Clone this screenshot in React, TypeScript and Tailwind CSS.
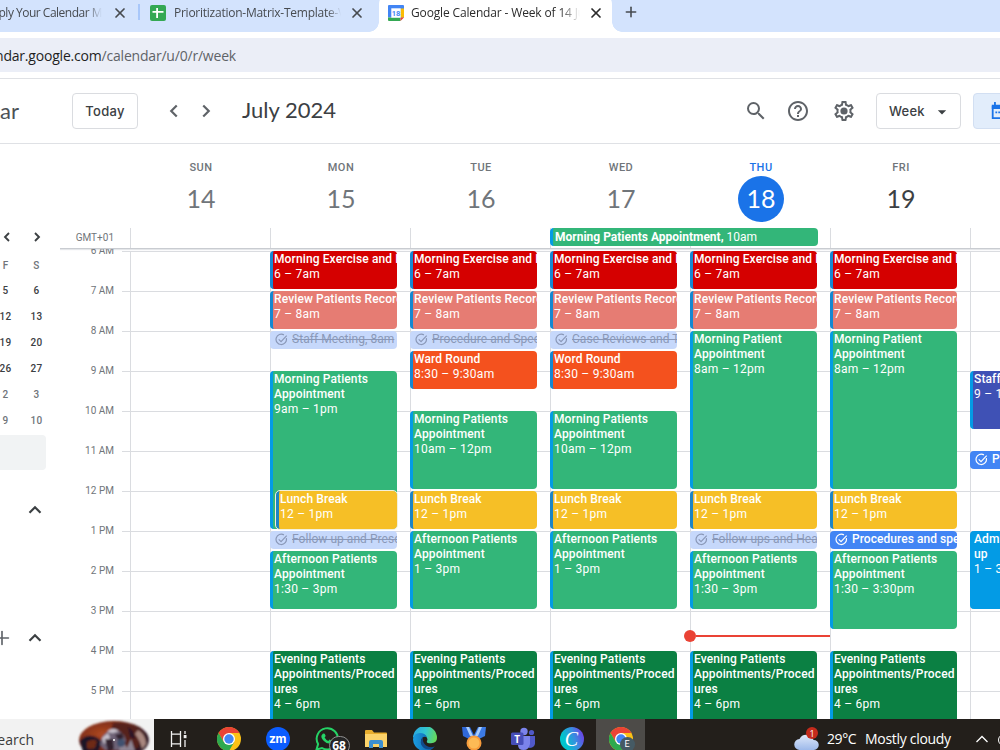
import type { ReactNode } from "react";
import { MdSearch, MdHelpOutline, MdArrowDropDown } from "react-icons/md";
import { ChevronLeft, ChevronRight, ChevronUp, Plus, X } from "lucide-react";
import clsx from "clsx";

type CalEvent = {
  title: string;
  time?: string;
  start: number;
  end: number;
  kind: "red" | "pink" | "green" | "dark" | "yellow" | "orange" | "indigo" | "blue" | "done" | "task";
  nested?: boolean;
};

type Day = { name: string; date: number; state: "past" | "today" | "future"; events: CalEvent[] };

const FIRST_HOUR = 6;

const exercise: CalEvent = { title: "Morning Exercise and Reading", time: "6 – 7am", start: 6, end: 7, kind: "red" };
const review: CalEvent = { title: "Review Patients Records", time: "7 – 8am", start: 7, end: 8, kind: "pink" };
const lunch: CalEvent = { title: "Lunch Break", time: "12 – 1pm", start: 12, end: 13, kind: "yellow" };
const evening: CalEvent = { title: "Evening Patients Appointments/Procedures", time: "4 – 6pm", start: 16, end: 18, kind: "dark" };

const morning = (title: string, time: string, start: number, end: number): CalEvent => ({ title, time, start, end, kind: "green" });
const afternoon = (time: string, start: number, end: number): CalEvent => ({
  title: "Afternoon Patients Appointment",
  time,
  start,
  end,
  kind: "green",
});

const days: Day[] = [
  { name: "SUN", date: 14, state: "past", events: [] },
  {
    name: "MON",
    date: 15,
    state: "past",
    events: [
      exercise,
      review,
      { title: "Staff Meeting, 8am", start: 8, end: 8.5, kind: "done" },
      morning("Morning Patients Appointment", "9am – 1pm", 9, 13),
      { ...lunch, nested: true },
      { title: "Follow up and Prescriptions", start: 13, end: 13.5, kind: "done" },
      afternoon("1:30 – 3pm", 13.5, 15),
      evening,
    ],
  },
  {
    name: "TUE",
    date: 16,
    state: "past",
    events: [
      exercise,
      review,
      { title: "Procedure and Specialist", start: 8, end: 8.5, kind: "done" },
      { title: "Ward Round", time: "8:30 – 9:30am", start: 8.5, end: 9.5, kind: "orange" },
      morning("Morning Patients Appointment", "10am – 12pm", 10, 12),
      lunch,
      afternoon("1 – 3pm", 13, 15),
      evening,
    ],
  },
  {
    name: "WED",
    date: 17,
    state: "past",
    events: [
      exercise,
      review,
      { title: "Case Reviews and Tests", start: 8, end: 8.5, kind: "done" },
      { title: "Word Round", time: "8:30 – 9:30am", start: 8.5, end: 9.5, kind: "orange" },
      morning("Morning Patients Appointment", "10am – 12pm", 10, 12),
      lunch,
      afternoon("1 – 3pm", 13, 15),
      evening,
    ],
  },
  {
    name: "THU",
    date: 18,
    state: "today",
    events: [
      exercise,
      review,
      morning("Morning Patient Appointment", "8am – 12pm", 8, 12),
      lunch,
      { title: "Follow ups and Health", start: 13, end: 13.5, kind: "done" },
      afternoon("1:30 – 3pm", 13.5, 15),
      evening,
    ],
  },
  {
    name: "FRI",
    date: 19,
    state: "future",
    events: [
      exercise,
      review,
      morning("Morning Patient Appointment", "8am – 12pm", 8, 12),
      lunch,
      { title: "Procedures and specialist", start: 13, end: 13.5, kind: "task" },
      afternoon("1:30 – 3:30pm", 13.5, 15.5),
      evening,
    ],
  },
  {
    name: "",
    date: 20,
    state: "future",
    events: [
      { title: "Staff Training", time: "9 – 10:30am", start: 9, end: 10.5, kind: "indigo" },
      { title: "Procedures", start: 11, end: 11.5, kind: "task" },
      { title: "Admin and Follow up", time: "1 – 3pm", start: 13, end: 15, kind: "blue" },
    ],
  },
];

const hours = ["6 AM", "7 AM", "8 AM", "9 AM", "10 AM", "11 AM", "12 PM", "1 PM", "2 PM", "3 PM", "4 PM", "5 PM"];

const eventColors: Record<CalEvent["kind"], string> = {
  red: "bg-[#d50000] border-[#1488d2]",
  pink: "bg-[#e67c73] border-[#1488d2]",
  green: "bg-[#33b679] border-[#039be5]",
  dark: "bg-[#0b8043] border-[#039be5]",
  yellow: "bg-[#f6bf26] border-[#1d84c4]",
  orange: "bg-[#f4511e] border-[#1488d2]",
  indigo: "bg-[#3f51b5] border-[#039be5]",
  blue: "bg-[#039be5] border-[#039be5] pr-5",
  done: "bg-[#c6d8fb]",
  task: "bg-[#4285f4]",
};

function TaskCheck() {
  return (
    <svg viewBox="0 0 14 14" className="size-[13px] shrink-0" fill="none" stroke="currentColor" strokeWidth="1.3">
      <path d="M12.2 5.6A5.6 5.6 0 1 1 9.6 2" />
      <path d="M4 6.8l2.5 2.5L12.6 2.8" />
    </svg>
  );
}

function EventCard({ event }: { event: CalEvent }) {
  const row = (event.start - FIRST_HOUR) * 2 + 1;
  const span = (event.end - event.start) * 2;
  const isTask = event.kind === "done" || event.kind === "task";

  return (
    <div
      className={clsx(
        "z-10 col-start-1 mb-[2px] mr-[13px] overflow-hidden rounded-[4px] text-[12px] leading-[15px]",
        eventColors[event.kind],
        event.nested ? "ml-[5px] outline outline-[#f3f0dc]" : "-ml-px",
        isTask ? "flex items-center gap-[4px] whitespace-nowrap pb-[2px] pl-[5px] tracking-[0.05px]" : "border-l-[3px] pl-px pt-px text-white",
        event.kind === "done" && "text-[#8a98b8] line-through",
        event.kind === "task" && "font-medium text-white",
      )}
      style={{ gridRow: `${row} / span ${span}` }}
    >
      {isTask ? (
        <>
          <TaskCheck />
          <span>{event.title}</span>
        </>
      ) : (
        <>
          <div className={clsx("font-medium tracking-[0.12px]", span <= 2 ? "whitespace-nowrap" : "wrap-anywhere")}>{event.title}</div>
          <div className="whitespace-nowrap tracking-[0.25px]">{event.time}</div>
        </>
      )}
    </div>
  );
}

function DayColumn({ day }: { day: Day }) {
  return (
    <div className="relative grid w-[140px] shrink-0 grid-cols-[minmax(0,1fr)] grid-rows-[repeat(24,20px)] border-l border-[#dadce0]">
      {hours.map((h, i) => (
        <div key={h} className="col-start-1 border-t border-[#dadce0]" style={{ gridRow: `${i * 2 + 1} / span 2` }} />
      ))}
      {day.events.map((e) => (
        <EventCard key={e.title + e.start} event={e} />
      ))}
      {day.state === "today" && (
        <div className="absolute -left-[7px] right-0 top-[379px] z-20 flex items-center">
          <span className="size-3 rounded-full bg-[#ea4335]" />
          <span className="h-[2px] flex-1 bg-[#ea4335]" />
        </div>
      )}
    </div>
  );
}

function TabStrip() {
  return (
    <div className="flex h-8 shrink-0 bg-[#d3e3fd] font-['Open_Sans',sans-serif] text-[12px] text-[#474b50]">
      <div className="flex w-[138px] items-center overflow-hidden pb-[7px]">
        <span className="flex w-[102px] shrink-0 justify-end overflow-hidden whitespace-nowrap tracking-[-0.5px] [mask-image:linear-gradient(90deg,#000_85%,transparent)]">
          Apply Your Calendar M
        </span>
        <X className="ml-[10px] size-4 shrink-0" strokeWidth={2.6} />
      </div>
      <div className="mt-1 h-4 w-[2px] bg-[#a8c7fa]" />
      <div className="flex w-[239px] items-center pb-[7px] pl-[10px]">
        <svg viewBox="0 0 16 16" className="size-4 shrink-0">
          <rect width="16" height="16" rx="2" fill="#34a853" />
          <path d="M7.1 3v10M2.5 6.9h11" stroke="#fff" strokeWidth="1.8" />
        </svg>
        <span className="ml-2 w-[167px] shrink-0 overflow-hidden whitespace-nowrap tracking-[-0.25px] [mask-image:linear-gradient(90deg,#000_92%,transparent)]">
          Prioritization-Matrix-Template-V
        </span>
        <X className="ml-2 size-4 shrink-0" strokeWidth={2.6} />
      </div>
      <div className="relative -mt-[6px] flex w-[233px] items-center rounded-t-[10px] bg-white pb-[7px] pl-[9px] pt-[6px] text-[#2b2b2b]">
        <span className="absolute -left-[10px] bottom-0 size-[10px] bg-[radial-gradient(circle_at_0_0,transparent_9.5px,#fff_10px)]" />
        <span className="absolute -right-[10px] bottom-0 size-[10px] bg-[radial-gradient(circle_at_100%_0,transparent_9.5px,#fff_10px)]" />
        <svg viewBox="0 0 16 16" className="size-4 shrink-0">
          <path d="M0 1a1 1 0 0 1 1-1h14a1 1 0 0 1 1 1v11.5H0z" fill="#4285f4" />
          <path d="M12.5 3.5H16v9h-3.5z" fill="#fbbc04" />
          <path d="M0 12.5h12.5V16H1a1 1 0 0 1-1-1z" fill="#34a853" />
          <path d="M12.5 12.5H16L12.5 16z" fill="#ea4335" />
          <rect x="3.3" y="3.3" width="9.4" height="9.4" fill="#fff" />
          <text x="8" y="10.8" fontSize="7.5" fontWeight="700" textAnchor="middle" fill="#4285f4" fontFamily="Roboto">18</text>
        </svg>
        <span className="ml-[7px] w-[169px] shrink-0 overflow-hidden whitespace-nowrap tracking-[-0.15px] [mask-image:linear-gradient(90deg,#000_88%,transparent)]">
          Google Calendar - Week of 14 July
        </span>
        <X className="ml-2 size-4 shrink-0" strokeWidth={2.6} />
      </div>
      <div className="flex items-center pb-[8px] pl-[11px]">
        <Plus className="size-4" strokeWidth={2.4} />
      </div>
    </div>
  );
}

function CalendarHeader() {
  return (
    <header className="flex h-[66px] shrink-0 items-center overflow-hidden border-y border-[#dfe1e5] font-['Lato',sans-serif] text-[#3c4043]">
      <div className="flex w-[19px] shrink-0 justify-end pb-[2px] text-[22px] text-[#4d5156]">Calendar</div>
      <button className="ml-[53px] h-9 w-[66px] shrink-0 rounded-[4px] border border-[#dadce0] pt-px font-[Inter,sans-serif] text-[13px] font-medium tracking-[0.25px]">
        Today
      </button>
      <ChevronLeft className="ml-[25px] size-[22px] shrink-0 text-[#5f6368] [stroke-linecap:butt] [stroke-linejoin:miter]" strokeWidth={2.4} />
      <ChevronRight className="ml-[10px] size-[22px] shrink-0 text-[#5f6368] [stroke-linecap:butt] [stroke-linejoin:miter]" strokeWidth={2.4} />
      <h1 className="ml-[25px] w-[502px] shrink-0 whitespace-nowrap pb-[3px] text-[22px]">July 2024</h1>
      <div className="flex shrink-0 items-center text-[#5f6368]">
        <MdSearch className="size-6" />
        <MdHelpOutline className="ml-[18px] size-6" />
        <svg viewBox="0 0 24 24" className="ml-[22px] size-6" fill="currentColor">
          <path d="M19.43 12.98c.04-.32.07-.64.07-.98 0-.34-.03-.66-.07-.98l2.11-1.65c.19-.15.24-.42.12-.64l-2-3.46c-.09-.16-.26-.25-.44-.25-.06 0-.12.01-.17.03l-2.49 1c-.52-.4-1.08-.73-1.69-.98l-.38-2.65C14.46 2.18 14.25 2 14 2h-4c-.25 0-.46.18-.49.42l-.38 2.65c-.61.25-1.17.59-1.69.98l-2.49-1c-.06-.02-.12-.03-.18-.03-.17 0-.34.09-.43.25l-2 3.46c-.13.22-.07.49.12.64l2.11 1.65c-.04.32-.07.65-.07.98s.03.66.07.98l-2.11 1.65c-.19.15-.24.42-.12.64l2 3.46c.09.16.26.25.44.25.06 0 .12-.01.17-.03l2.49-1c.52.4 1.08.73 1.69.98l.38 2.65c.03.24.24.42.49.42h4c.25 0 .46-.18.49-.42l.38-2.65c.61-.25 1.17-.59 1.69-.98l2.49 1c.06.02.12.03.18.03.17 0 .34-.09.43-.25l2-3.46c.12-.22.07-.49-.12-.64l-2.11-1.65zm-1.98-1.71c.04.31.05.52.05.73 0 .21-.02.43-.05.73l-.14 1.13.89.7 1.08.84-.7 1.21-1.27-.51-1.04-.42-.9.68c-.43.32-.84.56-1.25.73l-1.06.43-.16 1.13-.2 1.35h-1.4l-.19-1.35-.16-1.13-1.06-.43c-.43-.18-.83-.41-1.23-.71l-.91-.7-1.06.43-1.27.51-.7-1.21 1.08-.84.89-.7-.14-1.13c-.03-.31-.05-.54-.05-.74s.02-.43.05-.73l.14-1.13-.89-.7-1.08-.84.7-1.21 1.27.51 1.04.42.9-.68c.43-.32.84-.56 1.25-.73l1.06-.43.16-1.13.2-1.35h1.39l.19 1.35.16 1.13 1.06.43c.43.18.83.41 1.23.71l.91.7 1.06-.43 1.27-.51.7 1.21-1.07.85-.89.7.14 1.13z" />
          <circle cx="12" cy="12" r="3.6" />
        </svg>
      </div>
      <button className="ml-[20px] flex h-9 w-[85px] shrink-0 items-center rounded-[4px] border border-[#dadce0] pl-3 pt-px font-[Inter,sans-serif] text-[13px] font-medium tracking-[0.2px]">
        Week
        <MdArrowDropDown className="ml-[7px] size-5" />
      </button>
      <div className="ml-3 flex h-9 w-14 shrink-0 items-center rounded-[4px] border border-[#d2dff2] bg-[#e2edfb] pl-4 text-[#1a73e8]">
        <svg viewBox="0 0 18 20" className="size-[18px] shrink-0" fill="none" stroke="currentColor" strokeWidth="2">
          <path d="M2 4h14v14H2z" />
          <path d="M1 6h16" strokeWidth="3.5" />
          <path d="M4.5 0v4M13.5 0v4" />
          <path d="M5 11.5h2M8.2 11.5h2M11.4 11.5h2" />
        </svg>
      </div>
    </header>
  );
}

const miniDates = [
  ["5", "6"],
  ["12", "13"],
  ["19", "20"],
  ["26", "27"],
  ["2", "3"],
  ["9", "10"],
];

function Sidebar() {
  return (
    <aside className="flex w-[60px] shrink-0 flex-col overflow-hidden pt-[83px] text-[10px] font-medium text-[#3c4043]">
      <div className="-ml-[3px] flex gap-[10px]">
        <ChevronLeft className="size-5 shrink-0 p-[2px] [stroke-linecap:butt] [stroke-linejoin:miter]" strokeWidth={2.8} />
        <ChevronRight className="size-5 shrink-0 p-[2px] [stroke-linecap:butt] [stroke-linejoin:miter]" strokeWidth={2.8} />
      </div>
      <div className="-ml-[10px] mt-[6px] grid w-[62px] grid-cols-2 text-center tracking-[0.2px]">
        <span className="h-[25px] leading-[26px] text-[#70757a]">F</span>
        <span className="h-[25px] leading-[26px] text-[#70757a]">S</span>
        {miniDates.map((week, i) =>
          week.map((d) => (
            <span key={d} className={clsx("h-[26px] leading-[26px]", i > 3 && "text-[#70757a]")}>
              {d}
            </span>
          )),
        )}
      </div>
      <div className="mt-px h-[35px] w-[46px] shrink-0 rounded-r-[4px] bg-[#f1f3f4]" />
      <ChevronUp className="ml-[24px] mt-[29px] size-[22px] shrink-0 [stroke-linecap:butt] [stroke-linejoin:miter]" strokeWidth={2.4} />
      <div className="mt-[106px] flex shrink-0 items-center">
        <Plus className="-ml-[9px] size-[22px] shrink-0 text-[#5f6368]" strokeWidth={1.8} />
        <ChevronUp className="ml-[11px] size-[22px] shrink-0 [stroke-linecap:butt] [stroke-linejoin:miter]" strokeWidth={2.4} />
      </div>
    </aside>
  );
}

function WeekGrid() {
  return (
    <main className="flex min-w-0 flex-1 flex-col overflow-hidden">
      <div className="flex h-[84px] shrink-0 pl-[71px]">
        {days.map((d) => (
          <div key={d.date} className="flex w-[140px] shrink-0 flex-col items-center pt-[16px]">
            <span
              className={clsx(
                "h-[16px] text-[11px] font-medium leading-[16px] tracking-[0.5px]",
                d.state === "today" ? "text-[#1a73e8]" : "text-[#70757a]",
              )}
            >
              {d.name}
            </span>
            <span
              className={clsx(
                "flex size-[46px] items-center justify-center rounded-full pb-px font-['Lato',sans-serif] text-[25px]",
                d.state === "past" && "text-[#70757a]",
                d.state === "today" && "bg-[#1a73e8] text-white",
                d.state === "future" && "text-[#3c4043]",
              )}
            >
              {d.name && d.date}
            </span>
          </div>
        ))}
      </div>
      <div className="flex h-[21px] shrink-0 border-b border-[#c9ccd1] shadow-[0_1px_1px_#e4e6e9]">
        <span className="w-[54px] shrink-0 text-right text-[10px] leading-[20px] text-[#70757a]">GMT+01</span>
        <div className="ml-4 grid w-[980px] shrink-0 grid-cols-[repeat(7,140px)]">
          {days.map((d, i) => (
            <div key={d.date} className="row-start-1 border-l border-[#dadce0]" style={{ gridColumnStart: i + 1 }} />
          ))}
          <div className="col-span-2 col-start-4 row-start-1 mb-[2px] mr-3 flex items-center rounded-[4px] border-l-[3px] border-[#039be5] bg-[#33b679] pl-[2px] text-[12px] leading-[15px] text-white">
            <span className="whitespace-pre">
              <span className="font-bold">Morning Patients Appointment,</span> 10am
            </span>
          </div>
        </div>
      </div>
      <div className="flex min-h-0 flex-1 items-start overflow-hidden">
        <div className="-mt-[18px] w-[54px] shrink-0 text-right text-[10px] leading-[40px] text-[#70757a]">
          {hours.map((h) => (
            <div key={h} className="h-10">
              {h}
            </div>
          ))}
        </div>
        <div className="ml-2 mt-[2px] w-2 shrink-0">
          {hours.map((h) => (
            <div key={h} className="h-10 border-t border-[#dadce0]" />
          ))}
        </div>
        <div className="mt-[2px] flex">
          {days.map((d) => (
            <DayColumn key={d.date} day={d} />
          ))}
        </div>
      </div>
    </main>
  );
}

function ChromeIcon() {
  return (
    <svg viewBox="0 0 24 24" className="size-6">
      <circle cx="12" cy="12" r="12" fill="#fbc116" />
      <path d="M12 6h10.4A12 12 0 0 0 1.6 6l5.2 9z" fill="#ea4335" />
      <path d="M1.6 6A12 12 0 0 0 12 24l5.2-9H6.8z" fill="#2da94f" />
      <circle cx="12" cy="12" r="6" fill="#fff" />
      <circle cx="12" cy="12" r="4.7" fill="#4285f4" />
    </svg>
  );
}

function TaskItem({ children, active }: { children: ReactNode; active?: boolean }) {
  return <div className={clsx("flex h-full w-[49px] shrink-0 justify-center pt-2", active && "bg-[#4d4b48]")}>{children}</div>;
}

function Taskbar() {
  return (
    <footer className="flex h-[31px] shrink-0 overflow-hidden bg-[#231f1b] font-['Open_Sans',sans-serif]">
      <div className="flex w-[154px] shrink-0 bg-[#f2f2f2]">
        <div className="flex w-[34px] shrink-0 justify-end overflow-hidden pt-[9px] text-[14px] leading-[24px] text-[#3b3b3b]">Search</div>
        <svg viewBox="0 0 74 31" className="ml-[43px] h-[31px] w-[74px]">
          <defs>
            <radialGradient id="wing" cx="0.35" cy="0.35" r="0.75">
              <stop offset="0" stopColor="#b04a22" />
              <stop offset="0.5" stopColor="#7c2c18" />
              <stop offset="0.85" stopColor="#2b1624" />
              <stop offset="1" stopColor="#57404a" />
            </radialGradient>
            <filter id="soft">
              <feGaussianBlur stdDeviation="1" />
            </filter>
          </defs>
          <g filter="url(#soft)">
            <ellipse cx="37" cy="21" rx="35" ry="19" fill="url(#wing)" />
            <path d="M3 22q5-6 12-5t10 7l-4 9H6z" fill="#1f1428" />
            <path d="M10 23q6-4 10-1l-2 7q-6 2-8 0z" fill="#6e2a18" />
            <path d="M36 4q18-2 28 10l-3 15H46q3-14-12-18z" fill="#57201a" />
            <path d="M23 26q1-12 12-15 12 0 14 11l-5 9H28z" fill="#6f6377" />
            <path d="M30 13q5-6 12-1l-6 2zM25 19l6-5 2 5-6 6z" fill="#c6bfca" />
            <path d="M28 20h8l1 10-6 3zM38 16l7-2 2 5-5 3z" fill="#32232f" />
            <path d="M45 19l5 10 4-9 4 12H42z" fill="#8f8594" />
            <path d="M51 8q6 3 7 12l-5-2z" fill="#2a1525" />
            <path d="M61 11q8 5 8 14l-4 5q-2-9-7-15z" fill="#a98880" />
            <circle cx="44" cy="24" r="4" fill="#40516f" />
          </g>
          <circle cx="37" cy="21" r="1" fill="#fff" />
        </svg>
      </div>
      <div className="flex h-full w-[50px] shrink-0 justify-center pt-[12px]">
        <svg viewBox="0 0 18 16" className="h-4 w-[18px]" fill="none" stroke="#f2f2f2" strokeWidth="1.3">
          <path d="M1.5 0v3.2h9V0M1.5 16v-3.2h9V16M1.5 3.2v9.6M10.5 3.2v9.6" />
          <path d="M15 0v3M15 9v7" />
          <path d="M13.7 4h2.8v3.2h-2.8z" fill="#f2f2f2" stroke="none" />
        </svg>
      </div>
      <TaskItem>
        <ChromeIcon />
      </TaskItem>
      <TaskItem>
        <div className="flex size-6 items-center justify-center rounded-full bg-[#0b5cff] pb-px font-[Inter,sans-serif] text-[12px] font-bold leading-none tracking-[-0.3px] text-white">
          zm
        </div>
      </TaskItem>
      <TaskItem>
        <div className="relative h-6 w-6">
          <svg viewBox="0 0 24 24" className="size-6" fill="none">
            <path d="M1.5 22.5l1.6-5.4A10.6 10.6 0 1 1 7 21z" stroke="#25d366" strokeWidth="2" />
            <path d="M8 6.5l1.7.2 1 2.4-1.1 1.5q1.2 2.3 3.7 3.4l1.3-1.5 2.5 1.2q.2 2-2 2.8-3 .6-6.2-2.5T6.5 8.5z" fill="#25d366" />
          </svg>
          <span className="absolute left-[14px] top-[9px] flex h-[19px] w-[21px] items-center justify-center rounded-full border border-[#8f8f8f] bg-[#252525] text-[12px] font-bold leading-none text-white">
            68
          </span>
        </div>
      </TaskItem>
      <TaskItem>
        <svg viewBox="0 0 24 24" className="size-6">
          <path d="M1 4q0-1 1-1h6l2 2.5h12q1 0 1 1V20H1z" fill="#e8ad2d" />
          <path d="M1 7h22v13H1z" fill="#fcd36a" />
          <path d="M5 21v-6q0-2 2-2h10q2 0 2 2v6h-4v-4H9v4z" fill="#3c8fd0" />
        </svg>
      </TaskItem>
      <TaskItem>
        <svg viewBox="0 0 24 24" className="size-6">
          <defs>
            <linearGradient id="edgeTop" x1="0" x2="1" y1="0.3" y2="0.5">
              <stop offset="0" stopColor="#2aa5e0" />
              <stop offset="0.5" stopColor="#32c6d0" />
              <stop offset="1" stopColor="#66d85a" />
            </linearGradient>
            <linearGradient id="edgeLow" x1="0" x2="1">
              <stop offset="0" stopColor="#1b9de2" />
              <stop offset="1" stopColor="#0c59a4" />
            </linearGradient>
          </defs>
          <path d="M0 11A12 12 0 0 1 24 11q0 5-6 5.3-5 0-4-2.3 1.5-3-2-5Q5 5 0 11z" fill="url(#edgeTop)" />
          <path d="M0 12q1-6 7-6 5 0 7 4-6-1-6 5 1 6 8 6 3 0 5.5-1.5A12 12 0 0 1 0 12z" fill="url(#edgeLow)" />
          <path d="M10 10q-4 4-1 9 4 5 10 2.5l3-2q-5 2-9-1-4-3-3-8.5z" fill="#114a8b" />
        </svg>
      </TaskItem>
      <TaskItem>
        <svg viewBox="0 0 24 24" className="size-6">
          <path d="M0 0h8l5 10-4 3-8-4z" fill="#2f68d8" />
          <path d="M24 0h-8l-5 10 4 3 8-4z" fill="#3c7be6" />
          <path d="M4 0h3l4 9H8zM20 0h-3l-4 9h3z" fill="#a9cdfb" />
          <circle cx="12" cy="16" r="7.5" fill="#f79b3b" />
          <circle cx="12" cy="16" r="5.5" fill="#fdba55" />
        </svg>
      </TaskItem>
      <TaskItem>
        <svg viewBox="0 0 24 24" className="size-6">
          <circle cx="13" cy="4.5" r="3.7" fill="#7b83eb" />
          <circle cx="20.5" cy="5.5" r="2.6" fill="#5059c9" />
          <path d="M16 9h8v8q-1 4-6 4z" fill="#5059c9" />
          <path d="M7 9h12v8q-1 6-6.5 6T7 18z" fill="#7b83eb" />
          <rect x="0" y="5.5" width="12.5" height="12.5" rx="1.5" fill="#464eb8" />
          <text x="6.2" y="15.5" fontSize="10" fontWeight="700" textAnchor="middle" fill="#fff">T</text>
        </svg>
      </TaskItem>
      <TaskItem>
        <div className="flex size-6 items-center justify-center rounded-full bg-[linear-gradient(70deg,#00c4cc_25%,#3a8be0_60%,#7d2ae8)] font-['Liberation_Serif',serif] text-[20px] italic leading-none text-white">
          C
        </div>
      </TaskItem>
      <TaskItem active>
        <div className="relative size-6">
          <ChromeIcon />
          <span className="absolute left-[11px] top-[10px] flex size-[15px] items-center justify-center rounded-full bg-[#455a64] font-[Roboto,sans-serif] text-[9px] leading-none text-white">
            E
          </span>
        </div>
      </TaskItem>
      <div className="ml-[149px] flex shrink-0 pt-2 text-white">
        <div className="relative h-6 w-[33px]">
          <svg viewBox="0 0 26 24" className="h-6 w-[26px]">
            <defs>
              <linearGradient id="cloud" x1="0" x2="0" y1="0" y2="1">
                <stop offset="0" stopColor="#dfe9fa" />
                <stop offset="1" stopColor="#9db9ea" />
              </linearGradient>
            </defs>
            <path d="M6 23a5.5 5.5 0 0 1-.5-11A7.5 7.5 0 0 1 19.5 13 5 5 0 0 1 20 23z" fill="url(#cloud)" />
          </svg>
          <span className="absolute left-[12px] top-0 flex size-3 items-center justify-center rounded-full bg-[#c42b1c] text-[9px] leading-none">
            1
          </span>
        </div>
        <span className="w-[38px] whitespace-nowrap text-[14px] leading-[23px] tracking-[-0.4px]">29°C</span>
        <span className="w-[111px] whitespace-nowrap text-[14px] leading-[23px] tracking-[-0.3px]">Mostly cloudy</span>
        <svg viewBox="0 0 12 8" className="mt-[8px] h-2 w-3" fill="none" stroke="#fff" strokeWidth="1.3">
          <path d="M.5 7L6 1.5 11.5 7" />
        </svg>
        <span className="ml-[10px] mt-[7px] size-3 shrink-0 rounded-full border border-white" />
      </div>
    </footer>
  );
}

export default function App() {
  return (
    <div className="flex h-[750px] w-[1000px] flex-col overflow-hidden bg-white font-[Roboto,sans-serif]">
      <TabStrip />
      <div className="mb-[6px] mt-[6px] flex h-[34px] shrink-0 items-center bg-[#ebeef7] font-['Open_Sans',sans-serif] text-[14px]">
        <div className="flex w-[236px] shrink-0 justify-end overflow-hidden whitespace-nowrap tracking-[-0.2px] text-[#5f6368]">
          <span className="text-[#1f1f1f]">calendar.google.com</span>/calendar/u/0/r/week
        </div>
      </div>
      <CalendarHeader />
      <div className="flex min-h-0 flex-1">
        <Sidebar />
        <WeekGrid />
      </div>
      <Taskbar />
    </div>
  );
}
